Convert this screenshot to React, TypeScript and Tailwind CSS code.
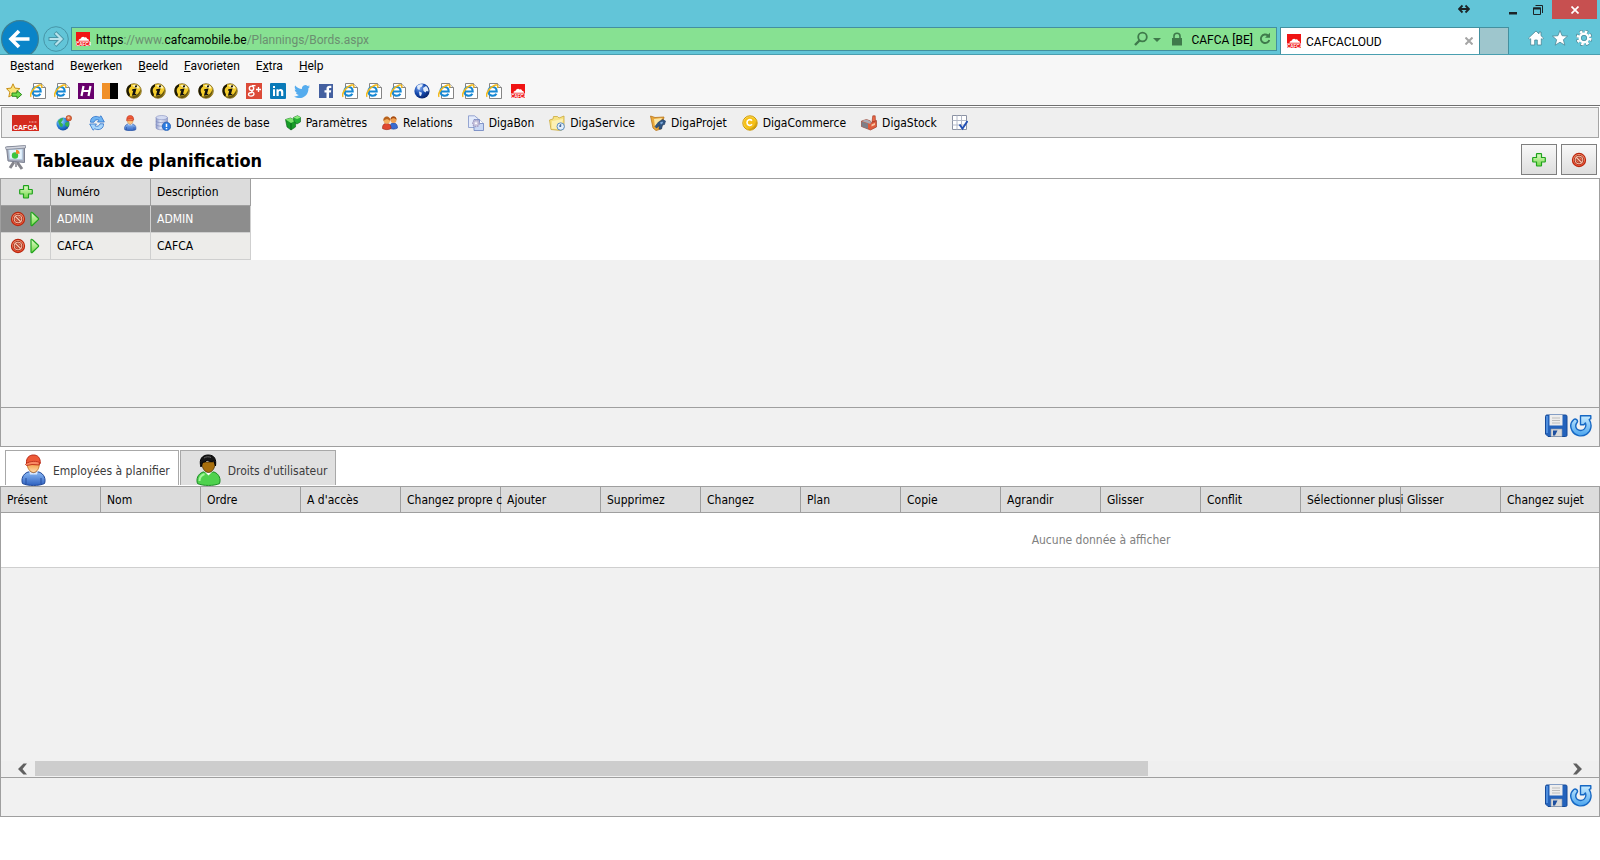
import type { ReactNode } from "react";

const tahoma = "font-['DejaVu_Sans_Condensed','DejaVu_Sans',sans-serif]";
const segoe = "font-['Roboto','Noto_Sans',sans-serif]";

function Icon({
  size = "size-4",
  box = 16,
  children,
}: {
  size?: string;
  box?: number;
  children: ReactNode;
}) {
  return (
    <svg className={`${size} shrink-0`} viewBox={`0 0 ${box} ${box}`} fill="none" aria-hidden="true">
      {children}
    </svg>
  );
}

function Gradients() {
  return (
    <svg className="absolute size-0" aria-hidden="true">
      <defs>
        <linearGradient id="red" x1="0" y1="0" x2="0" y2="1">
          <stop offset="0" stopColor="#fb9a78" />
          <stop offset="1" stopColor="#ee4a2c" />
        </linearGradient>
        <linearGradient id="green" x1="0" y1="0" x2="0" y2="1">
          <stop offset="0" stopColor="#e2fbca" />
          <stop offset="1" stopColor="#74d84a" />
        </linearGradient>
        <linearGradient id="blue" x1="0" y1="0" x2="0" y2="1">
          <stop offset="0" stopColor="#8ab8f4" />
          <stop offset="1" stopColor="#2f62c0" />
        </linearGradient>
        <linearGradient id="sky" x1="0" y1="0" x2="0" y2="1">
          <stop offset="0" stopColor="#c8ecff" />
          <stop offset="1" stopColor="#4aa4ee" />
        </linearGradient>
        <linearGradient id="skin" x1="0" y1="0" x2="0" y2="1">
          <stop offset="0" stopColor="#f29a3c" />
          <stop offset="1" stopColor="#ffdcae" />
        </linearGradient>
        <linearGradient id="gold" x1="0" y1="0" x2="1" y2="1">
          <stop offset="0" stopColor="#fff3a0" />
          <stop offset="0.6" stopColor="#f3c81e" />
          <stop offset="1" stopColor="#a87400" />
        </linearGradient>
        <linearGradient id="steel" x1="0" y1="0" x2="1" y2="0">
          <stop offset="0" stopColor="#8f9ccd" />
          <stop offset="0.4" stopColor="#e2e7f7" />
          <stop offset="1" stopColor="#9aa5ce" />
        </linearGradient>
        <radialGradient id="earth" cx="0.35" cy="0.3" r="0.8">
          <stop offset="0" stopColor="#a5dcff" />
          <stop offset="0.5" stopColor="#2a86dc" />
          <stop offset="1" stopColor="#0c3f94" />
        </radialGradient>
        <radialGradient id="navy" cx="0.35" cy="0.3" r="0.8">
          <stop offset="0" stopColor="#7fa8f0" />
          <stop offset="0.5" stopColor="#164bb0" />
          <stop offset="1" stopColor="#061c5c" />
        </radialGradient>
      </defs>
    </svg>
  );
}

function CafcaIcon() {
  return (
    <Icon>
      <path d="M1 1h14v14H1z" fill="#f01414" />
      <path d="M3.500 9.800c0-1.500 1.500-2 2.500-2.300 0-1.500 2.500-2.500 3.500-1 2-.5 2.500.5 2.500 1.300 1.500 0 2 1 2 2z" fill="#fff" />
      <path d="M1 10.300h14v.8H1z" fill="#ffb8b8" />
      <text x="1" y="14.800" fontSize="4.500" fontWeight="bold" fill="#fff" fontFamily="Liberation Sans">CAFCA</text>
    </Icon>
  );
}

function PageIcon() {
  return (
    <Icon>
      <path d="M3.500.5h8l4 4v11h-12z" fill="#fff" stroke="#858585" />
      <path d="M11.500.5v4h4" fill="#eee" stroke="#858585" />
      <path d="M2.500 8.500h8.200c0-6-8.200-6-8.200 0 0 5 6.200 5.300 7.900 2.200" stroke="#1788d4" strokeWidth="2.100" />
      <path d="M1.200 13.800C-1 11.500 3.500 4 9.500 2c2.500-.5 2.800 1 1.800 2.800" stroke="#f2b91c" strokeWidth="1.500" />
    </Icon>
  );
}

function StarArrowIcon() {
  return (
    <Icon>
      <path d="M7 .8l1.900 4.300 5 .5-3.700 3.500 1 4.900L7 11.500l-4.200 2.500 1-4.900L.5 5.600l4.600-.5z" fill="#fce37a" stroke="#c8901a" />
      <path d="M6 10h5V7.600l4.700 4-4.700 4v-2.300H6z" fill="#6fdc4a" stroke="#2d8a1e" />
    </Icon>
  );
}

function HotmailIcon() {
  return (
    <Icon>
      <path d="M0 0h16v16H0z" fill="#68006c" />
      <path d="M5.500 3L3.500 13M12.500 3l-2 10M4.500 8h7" stroke="#fff" strokeWidth="2.200" />
    </Icon>
  );
}

function StripesIcon() {
  return (
    <Icon>
      <path d="M0 0h8v16H0z" fill="#f09028" />
      <path d="M8 0h8v16H8z" fill="#000" />
    </Icon>
  );
}

function InfoBallIcon() {
  return (
    <Icon>
      <circle cx="8" cy="8" r="7.300" fill="#f4cd2c" stroke="#77601a" strokeWidth=".8" />
      <path d="M6 2.500c3-1.500 6.500-.5 7.500 2.500-2 1.500-5-.5-7.500-2.500z" fill="#fff3b4" />
      <path d="M5 1.300C0 2.500-.8 9 2.300 13c1.700.8 2.200-1 1-3C2 7.500 3 4.500 5 3.500z" fill="#1b1805" />
      <path d="M14.500 6c1 4-2 9-6.500 9-2 0-3.500-.7-4.500-1.700 4 .7 9.500-1.300 11-7.300z" fill="#3b3007" opacity=".75" />
      <path d="M9.200 2.600l2-.3-.5 2-2 .3zM6.300 6.300l4.200-.8L9 11l1.500-.2-.4 1.300-4.200.7 1.400-5.200-1.400.2z" fill="#111" />
    </Icon>
  );
}

function GooglePlusIcon() {
  return (
    <Icon>
      <path d="M0 0h16v16H0z" fill="#dc4a38" />
      <circle cx="5.500" cy="5.300" r="2.200" stroke="#fff" strokeWidth="1.400" />
      <path d="M6 2.600h3.500M6.500 7.500c-2.500 1.500 2 1.500 1.500 3.700-.5 2.600-5.500 2.300-5.500.3 0-1.400 1.500-2 3.500-2" stroke="#fff" strokeWidth="1.300" />
      <path d="M10 6.500h5M12.500 4v5" stroke="#fff" strokeWidth="1.300" />
    </Icon>
  );
}

function LinkedInIcon() {
  return (
    <Icon>
      <rect width="16" height="16" rx="1" fill="#0a7ab8" />
      <path d="M3 6.200h2V13H3zM3 3h2v2H3zM6.500 6.200h2v1c1.200-1.700 4.800-1.700 4.800 1.800v4h-2.200V9.500c0-2-2.400-2-2.400 0V13H6.500z" fill="#fff" />
    </Icon>
  );
}

function TwitterIcon() {
  return (
    <Icon>
      <path d="M16 3.500a6 6 0 01-1.800.5 3 3 0 001.400-1.800 6 6 0 01-2 .8 3.300 3.300 0 00-5.600 3C5.300 5.900 3 4.600 1.200 2.500c-.9 1.500-.4 3.400 1 4.400-.5 0-1-.2-1.500-.4 0 1.500 1.100 2.900 2.700 3.200-.5.100-1 .1-1.500 0 .4 1.300 1.600 2.200 3 2.300A6.600 6.600 0 010 13.400C7 17.500 14.700 13 14.400 5.200c.6-.5 1.200-1 1.600-1.700z" fill="#55acee" />
    </Icon>
  );
}

function FacebookIcon() {
  return (
    <Icon>
      <path d="M1 1h14v14H1z" fill="#4460a0" />
      <path d="M8.500 15V9.500h-2V7.300h2V5.500c0-2 1.300-2.800 3-2.800h1.800V5h-1.200c-.9 0-1.100.4-1.100 1v1.300h2.200l-.3 2.200H11V15z" fill="#fff" />
    </Icon>
  );
}

function WorldIcon() {
  return (
    <Icon>
      <circle cx="8" cy="8" r="7.600" fill="url(#navy)" />
      <path d="M3 3c2-2 5-2 6-1.300L7.500 4 6 4.500 5.500 7 3.500 6zM9 5l3-2c2 1.500 2.800 4 2.400 5.500L12.500 8l-1 1.500L9.500 8zM5 8.500l3 1.200L7 13l-1.500-.5z" fill="#e2ecfa" />
    </Icon>
  );
}

function GlobeIcon() {
  return (
    <Icon>
      <circle cx="7" cy="9" r="6.500" fill="url(#earth)" />
      <path d="M2 6c1-2 4-3.500 5-3l-.5 2.500L5 7.500l2 2-.8 2.500-2-.5L3 9zM9 8l3.500-1.500c1 2 .5 4.500-.5 5.500L9.500 11z" fill="#37b24d" />
      <circle cx="12.800" cy="3.200" r="2.800" fill="#e0683c" stroke="#a8401e" strokeWidth=".6" />
      <circle cx="12.500" cy="2.800" r="1.200" fill="#f9b99b" />
    </Icon>
  );
}

function RefreshIcon() {
  return (
    <Icon>
      <path d="M1.500 7.200C1 2.500 6 0 10.300 2.200L12 .8 15.300 7H8.500L10 5.200C7.800 4 5.500 5 5 7.200z" fill="#6fb4f2" stroke="#2e72ca" strokeWidth=".8" />
      <path d="M14.500 8.800c.5 4.700-4.500 7.200-8.800 5L4 15.200.7 9h6.800L6 10.800c2.200 1.200 4.500.2 5-2z" fill="#a9d6fb" stroke="#2e72ca" strokeWidth=".8" />
    </Icon>
  );
}

function WorkerIcon({ size }: { size?: string }) {
  return (
    <Icon size={size} box={32}>
      <path d="M5.500 29.500c-1.500-4 0-9.500 5.500-11.500h11c5.500 2 7 7.500 5.500 11.500-4.500 2.600-17.500 2.600-22 0z" fill="url(#blue)" stroke="#1f4696" />
      <path d="M12 17l4.500 2.500L21 17l-1 3.500h-7z" fill="#dce9fb" />
      <path d="M10 9c0 5 3 9.500 6.500 9.500S22.500 14 22.500 9z" fill="url(#skin)" stroke="#b86416" strokeWidth=".8" />
      <path d="M9.500 9.500C9 4 12 1 16.500 1 21 1 23.500 4 23.300 9.500L20 10.500l-8-1.500z" fill="#ee5a38" stroke="#b82410" />
      <path d="M8.500 10.500c1-2.500 9.500-4.500 14-2l-.5 2.500-7-.5-5.500 1z" fill="#f98a64" stroke="#b82410" strokeWidth=".8" />
      <path d="M9 24v6M24 24v6" stroke="#274f9f" />
    </Icon>
  );
}

function UserIcon({ size }: { size?: string }) {
  return (
    <Icon size={size} box={32}>
      <path d="M5.500 29.500c-1.500-4 0-9.500 5.500-11.500h11c5.500 2 7 7.500 5.500 11.500-4.500 2.600-17.500 2.600-22 0z" fill="#4fd24e" stroke="#1c8a25" />
      <path d="M7.500 27c0-4 2-6 5-7" stroke="#a5f59b" strokeWidth="2" />
      <path d="M12 17l4.500 4.500L21 17z" fill="#fff" />
      <path d="M10 8c-.5 6 3 10.500 6.500 10.500S23.500 14 23 8z" fill="#a86f0c" stroke="#4d3204" strokeWidth=".8" />
      <path d="M9 13C6.500 5 10.500 1 16 1c6.500 0 8.500 4 7.500 11l-1.500-5c-3 1-5 .5-7-1-1 2-3 2-4.500 2.500z" fill="#161616" stroke="#000" />
      <path d="M12 4c2-1.500 5-1.500 7-.5" stroke="#666" />
    </Icon>
  );
}

function DatabaseIcon() {
  return (
    <Icon>
      <path d="M1 2.500v10.300c0 2.700 11.500 2.700 11.500 0V2.500z" fill="url(#steel)" stroke="#7f8abc" strokeWidth=".6" />
      <ellipse cx="6.700" cy="2.600" rx="5.700" ry="2.100" fill="#d4dbf2" stroke="#8691c0" strokeWidth=".6" />
      <path d="M1 6c0 2.200 11.500 2.200 11.500 0M1 9.500c0 2.200 11.500 2.200 11.500 0" stroke="#7f8abc" strokeWidth=".7" />
      <circle cx="11.500" cy="11.400" r="4.200" fill="#2b7be0" stroke="#1550a8" strokeWidth=".6" />
      <path d="M11.500 8.700v3.200M11.500 12.900v1.400" stroke="#fff" strokeWidth="1.500" />
    </Icon>
  );
}

function CubesIcon() {
  return (
    <Icon>
      <path d="M.5 4.500l5-1.500L11 5.500l-.5 6.500L6 15 2 12z" fill="#179c27" stroke="#08601a" strokeWidth=".6" />
      <path d="M.5 4.500l5-1.500L11 5.500 6 8z" fill="#7be36c" />
      <path d="M6 8v7" stroke="#08601a" />
      <path d="M8.500 2.500l4-1.800 3.200 1.800-.3 4.500-3.400 2L9 6.500z" fill="#22b034" stroke="#08601a" strokeWidth=".6" />
      <path d="M8.500 2.500l4-1.800 3.200 1.800L12 4z" fill="#8bea7a" />
    </Icon>
  );
}

function PeopleIcon() {
  return (
    <Icon>
      <path d="M8 13c0-4 1-5 3.500-5s4 1.500 4 5c-2 1.500-6 1.500-7.500 0z" fill="#3a6cd0" stroke="#1e4296" strokeWidth=".6" />
      <circle cx="11.500" cy="5" r="3" fill="#f0a050" />
      <path d="M8.500 5c-.5-5 6.500-5 6 0-1.500-2-4-2.500-6 0z" fill="#a84c10" />
      <path d="M.5 13.500c0-4 1.500-5 4-5s4.500 1 4.500 5c-2 1.500-6.500 1.500-8.500 0z" fill="#e04830" stroke="#962010" strokeWidth=".6" />
      <circle cx="4.800" cy="5.500" r="3.200" fill="#f4b060" />
      <path d="M1.500 6c-1-6 7.500-6 6.700 0C6 3.500 4 3.500 1.500 6z" fill="#b8621c" />
    </Icon>
  );
}

function DocumentsIcon() {
  return (
    <Icon>
      <path d="M.5.800h6L10.500 4v8.500H.5z" fill="#e4ebfb" stroke="#7f92c8" strokeWidth=".8" />
      <path d="M6 4.500h5.500l4 4v7H6z" fill="#c9d8f5" stroke="#6a80bc" strokeWidth=".8" />
      <path d="M11.500 4.500v4h4" fill="#fff" stroke="#6a80bc" strokeWidth=".8" />
      <circle cx="8" cy="8.300" r="3.200" fill="#cdc9e0" stroke="#a19dc4" strokeWidth="1.400" strokeDasharray="1.500 .8" />
      <circle cx="8" cy="8.300" r="1" fill="#fff" />
    </Icon>
  );
}

function ServiceIcon() {
  return (
    <Icon>
      <path d="M.5 5L4 4l.5-2.500h4L10 3l5-2v12L12 15.500 2 14.500z" fill="#f7e283" stroke="#c9a83a" strokeWidth=".8" />
      <path d="M3 6l11-2-2 10.500L2.500 13.500z" fill="#fdf1b4" />
      <circle cx="11.700" cy="11.500" r="3.700" fill="#e3effc" stroke="#5f8fc0" />
      <path d="M11.700 9.200v2.400l-1.700-.8" stroke="#274f86" />
    </Icon>
  );
}

function ProjectIcon() {
  return (
    <Icon>
      <path d="M.5 1l4.500 1.500L14 2l-3 12-5 1.500L3 13z" fill="#e9a83a" stroke="#b8741a" strokeWidth=".8" />
      <path d="M4 4l8-1-2.500 7L5 12z" fill="#fbe5a4" />
      <path d="M5 11.500L8.500 7l4-2.500L15.500 6l-1 3.500-2 .5-1 4H9l.5-3.500-3 2.500z" fill="#2f5583" stroke="#19365e" strokeWidth=".6" />
      <path d="M10 7.500l2.500-1 .5 1.500-2 1.500z" fill="#7fa9d8" />
    </Icon>
  );
}

function CoinIcon() {
  return (
    <Icon>
      <circle cx="8" cy="8" r="7.200" fill="url(#gold)" stroke="#d19a08" />
      <circle cx="7.500" cy="7.500" r="5.600" fill="#f6bf17" />
      <path d="M10 5.800c-1.800-2.200-5-.9-5 1.700s3.200 3.900 5 1.700" stroke="#fff" strokeWidth="1.600" />
    </Icon>
  );
}

function StockIcon() {
  return (
    <Icon>
      <path d="M11 7l.8-6.200h2.400L14.500 7z" fill="#e86848" stroke="#a03018" strokeWidth=".6" />
      <path d="M.5 6l5-1.500 4 1.500V8l6-2.500V12l-6 3L.5 11.500z" fill="#df5c3c" stroke="#94301c" strokeWidth=".6" />
      <path d="M.5 6l5-1.500 4.500 2-.5 2.500z" fill="#a8abb5" />
      <path d="M.5 6.500v5L7 14V8.500z" fill="#7d7f88" />
      <path d="M10.500 9.500l3.500-1.500v2l-3.500 1.600z" fill="#f8c5a4" />
    </Icon>
  );
}

function GridCheckIcon() {
  return (
    <Icon>
      <path d="M.5.500h14v14H.5z" fill="#fff" stroke="#8c93a4" />
      <path d="M.5 5.500h14M.5 10h14M5 .5v14M9.500.5v14" stroke="#b4bac8" />
      <path d="M7.500 9.500l3 4 5-7.500" stroke="#2350b4" strokeWidth="1.900" />
    </Icon>
  );
}

function BoardIcon() {
  return (
    <svg className="h-7 w-6 shrink-0" viewBox="0 0 24 28" fill="none" aria-hidden="true">
      <path d="M10 18l-4 6M13 18l5 7" stroke="#85858c" strokeWidth="3" />
      <path d="M12 17v6" stroke="#a0a0a8" strokeWidth="2" />
      <path d="M2.500 3l18-1v16.500L4 17z" fill="#a6abba" stroke="#7b8091" />
      <path d="M4.800 5.500l13.500-.5v10.500l-12.700-.4z" fill="#e6f4ff" stroke="#b6cbe0" />
      <path d="M1.500 3L21.500 1.500V4L2 5.500z" fill="#d4d7e0" stroke="#777c8c" strokeWidth=".7" />
      <circle cx="11" cy="11.500" r="3.200" fill="#3cc440" />
      <path d="M12 9.800V5.800c2.300 0 3.700 1.600 3.700 4z" fill="#f28a2a" />
    </svg>
  );
}

function PlusIcon() {
  return (
    <Icon>
      <path
        d="M6 1.700h4c.3 0 .5.200.5.500v3.300h3.300c.3 0 .5.200.5.500v3.500c0 .3-.2.500-.5.500h-3.300v3.500c0 .3-.2.500-.5.500H6c-.3 0-.5-.2-.5-.5V10H2.200c-.3 0-.5-.2-.5-.5V6c0-.3.200-.5.500-.5h3.300V2.200c0-.3.200-.5.500-.5z"
        fill="url(#green)"
        stroke="#1fa31c"
        strokeWidth="1.200"
      />
    </Icon>
  );
}

function ForbidIcon() {
  return (
    <Icon>
      <circle cx="8" cy="8" r="6.600" fill="url(#red)" stroke="#b8260e" strokeWidth="1.100" />
      <circle cx="8" cy="8" r="3.900" stroke="#8c2a1a" strokeWidth="2.200" />
      <path d="M5.200 5.200l5.600 5.600" stroke="#8c2a1a" strokeWidth="2.800" />
      <circle cx="8" cy="8" r="3.900" stroke="#ffc4ac" strokeWidth="1" />
      <path d="M5.200 5.200l5.600 5.600" stroke="#ffc4ac" strokeWidth="1.400" />
    </Icon>
  );
}

function PlayIcon() {
  return (
    <svg className="h-4 w-3 shrink-0" viewBox="0 0 12 16" fill="none" aria-hidden="true">
      <path
        d="M2 2c0-.8.800-1 1.500-.3l5.800 5.500c.5.500.5 1 0 1.500l-5.800 5.600C2.800 15 2 14.800 2 14z"
        fill="url(#green)"
        stroke="#1fa31c"
        strokeWidth="1.200"
      />
    </svg>
  );
}

function SaveIcon() {
  return (
    <Icon size="size-6" box={24}>
      <path d="M1.500 2.500c0-1 .5-1.500 1.500-1.500h18.500c1 0 1.500.5 1.500 1.500V21c0 1-.5 1.500-1.500 1.500H4L1.500 20z" fill="#2463bc" stroke="#164a98" />
      <path d="M3 2v17" stroke="#5b9be8" strokeWidth="1.500" />
      <path d="M5.500 1h13v10.500h-13z" fill="#ededed" />
      <path d="M8 4h8M8 6.500h8M8 9h8" stroke="#bdbdbd" />
      <path d="M7 15h11v7.500H7z" fill="#d9d9d9" stroke="#8f98a8" strokeWidth=".6" />
      <path d="M9 16.500h4.500L11 21.500H9z" fill="#1d4f9f" />
    </Icon>
  );
}

function UndoIcon() {
  return (
    <Icon size="size-6" box={24}>
      <path
        d="M11.500 1.700h10.300v3c-.8.100-1.300.4-1.600.9 3.300 5 2 11.500-2.500 14.500-5.200 3.400-12 1.700-14.700-3.500C.8 12.300 2 8 4.800 5.500c1.700-1.500 4.600.8 3.400 2.800-1.800 2.300-1.800 5 0 6.900 2 1.800 5.300 1.800 7.200-.3 1.600-1.900 1.800-3.900 1-5.900l-1.600 1.800h-3.300z"
        fill="url(#sky)"
        stroke="#1668c4"
        strokeWidth="1.400"
        strokeLinejoin="round"
      />
    </Icon>
  );
}

const menu = [
  ["B", "e", "stand"],
  ["Be", "w", "erken"],
  ["", "B", "eeld"],
  ["", "F", "avorieten"],
  ["E", "x", "tra"],
  ["", "H", "elp"],
];

const favorites = [
  StarArrowIcon,
  PageIcon,
  PageIcon,
  HotmailIcon,
  StripesIcon,
  InfoBallIcon,
  InfoBallIcon,
  InfoBallIcon,
  InfoBallIcon,
  InfoBallIcon,
  GooglePlusIcon,
  LinkedInIcon,
  TwitterIcon,
  FacebookIcon,
  PageIcon,
  PageIcon,
  PageIcon,
  WorldIcon,
  PageIcon,
  PageIcon,
  PageIcon,
  CafcaIcon,
];

const shortcuts = [
  { icon: GlobeIcon, name: "Web" },
  { icon: RefreshIcon, name: "Actualiser" },
  { icon: WorkerIcon, name: "Employé" },
];

const modules = [
  { icon: DatabaseIcon, label: "Données de base" },
  { icon: CubesIcon, label: "Paramètres" },
  { icon: PeopleIcon, label: "Relations" },
  { icon: DocumentsIcon, label: "DigaBon" },
  { icon: ServiceIcon, label: "DigaService" },
  { icon: ProjectIcon, label: "DigaProjet" },
  { icon: CoinIcon, label: "DigaCommerce" },
  { icon: StockIcon, label: "DigaStock" },
];

const boards = [
  { number: "ADMIN", description: "ADMIN", selected: true },
  { number: "CAFCA", description: "CAFCA", selected: false },
];

const columns = [
  "Présent",
  "Nom",
  "Ordre",
  "A d'accès",
  "Changez propre c",
  "Ajouter",
  "Supprimez",
  "Changez",
  "Plan",
  "Copie",
  "Agrandir",
  "Glisser",
  "Conflit",
  "Sélectionner plusi",
  "Glisser",
  "Changez sujet",
];

function WindowControls() {
  return (
    <div className="flex h-[19px] justify-end pr-[3px]">
      <button aria-label="Resize" className="flex w-5 justify-end">
        <svg className="h-[18px] w-3" viewBox="0 0 12 18" fill="none" aria-hidden="true">
          <path d="M2 9h8M4.500 5.500L1 9l3.500 3.500M7.500 5.500L11 9l-3.500 3.500" stroke="#1c2326" strokeWidth="1.800" />
        </svg>
      </button>
      <button aria-label="Minimize" className="flex w-[54px] items-center justify-end pr-1">
        <Icon size="size-3" box={12}>
          <path d="M1 8h8v2.500H1z" fill="#1c2326" />
        </Icon>
      </button>
      <button aria-label="Restore" className="flex w-7 items-center justify-center">
        <Icon size="size-3" box={12}>
          <path d="M3.500 1.500h7V9M1.500 4h7v6.500h-7z" stroke="#1c2326" />
          <path d="M1 4.500h8" stroke="#1c2326" strokeWidth="2" />
        </Icon>
      </button>
      <button aria-label="Close" className="flex w-[45px] items-center justify-center bg-[#c75050]">
        <Icon size="size-2" box={8}>
          <path d="M.5.5l7 7M7.500.5l-7 7" stroke="#fff" strokeWidth="1.700" />
        </Icon>
      </button>
    </div>
  );
}

function AddressBar() {
  return (
    <div className="relative flex h-6 flex-1 items-center border border-[#43909f] bg-[#87e192] pr-[3px] pl-[3px]">
      <CafcaIcon />
      <label htmlFor="address" className="flex-1 pt-px pl-[5px] text-[#6b8f71]">
        <span className="text-black">https</span>://www.
        <span className="text-black">cafcamobile.be</span>/Plannings/Bords.aspx
      </label>
      <input id="address" type="text" className="absolute inset-y-0 left-6 w-1/2 bg-transparent outline-none" />
      <button aria-label="Search" className="flex items-center gap-1">
        <Icon>
          <circle cx="9.500" cy="6" r="4.300" stroke="#3f7a4b" strokeWidth="1.800" />
          <path d="M6.500 9.500L2 14" stroke="#3f7a4b" strokeWidth="2.400" />
        </Icon>
        <svg className="size-2" viewBox="0 0 8 8" aria-hidden="true">
          <path d="M0 3h8L4 7z" fill="#3f7a4b" />
        </svg>
      </button>
      <div className="flex items-center gap-2 pl-[10px]">
        <svg className="h-4 w-3" viewBox="0 0 12 16" fill="none" aria-hidden="true">
          <path d="M1 7h10v7.500H1z" fill="#3f7a4b" />
          <path d="M3 7.500V5c0-3.600 6-3.600 6 0v2.500" stroke="#3f7a4b" strokeWidth="1.600" />
        </svg>
        <span className="pt-px">CAFCA [BE]</span>
      </div>
      <button aria-label="Reload" className="pl-1">
        <Icon>
          <path d="M11 4.500A4.300 4.300 0 1012.300 9" stroke="#3f7a4b" strokeWidth="1.900" />
          <path d="M8 6.700h5V1.700z" fill="#3f7a4b" />
        </Icon>
      </button>
    </div>
  );
}

function BrowserBar() {
  return (
    <header className="flex h-[55px] items-stretch overflow-hidden border-b border-[#4a9fb0] bg-[#62c5d8]">
      <div className="flex shrink-0 items-start gap-1 pt-5 pl-px">
        <button aria-label="Back">
          <Icon size="size-[38px]" box={38}>
            <circle cx="19" cy="19" r="18.400" fill="#0a84c8" stroke="#3c7f92" strokeWidth="1.200" />
            <path d="M28.500 19H11M18 11l-8 8 8 8" stroke="#fff" strokeWidth="3.600" />
          </Icon>
        </button>
        <button aria-label="Forward" className="pt-[6px]">
          <Icon size="size-[26px]" box={26}>
            <circle cx="13" cy="13" r="12.300" stroke="#4795a7" />
            <path d="M5.500 13h12M12 6.500l6.500 6.500-6.500 6.500" stroke="#4795a7" strokeWidth="4" />
            <path d="M6.500 13h11M12.500 7l6 6-6 6" stroke="#b9e3ec" strokeWidth="2.200" />
          </Icon>
        </button>
      </div>

      <div className="flex flex-1 items-end pb-[3px] pl-[2px]">
        <AddressBar />
      </div>

      <div className="flex w-[323px] shrink-0 flex-col justify-between">
        <WindowControls />
        <div className="flex h-[27px] pl-[3px]">
          <div className="flex w-[200px] items-center border-x border-t border-[#43909f] bg-white pl-[5px]">
            <CafcaIcon />
            <span className="flex-1 pt-px pl-1">CAFCACLOUD</span>
            <button aria-label="Close tab" className="pr-[6px]">
              <Icon size="size-2" box={8}>
                <path d="M.5.5l7 7M7.500.5l-7 7" stroke="#a5a5a5" strokeWidth="2" />
              </Icon>
            </button>
          </div>
          <button aria-label="New tab" className="w-[29px] border-t border-r border-[#43909f] bg-[#9ec6cd]" />
          <div className="flex flex-1 items-center justify-end gap-2 pr-2 pb-[5px]">
            <button aria-label="Home">
              <Icon>
                <path d="M8 1L.5 8l1.300 1.500.9-.8V15h4v-5h2.600v5h4V8.700l.9.800L15.500 8 13 5.700V2h-2v1.800z" fill="#fff" stroke="#4a8795" strokeWidth=".8" />
              </Icon>
            </button>
            <button aria-label="Favorites">
              <Icon>
                <path d="M8 .5l2.100 5.200 5.500.4-4.200 3.600 1.400 5.500L8 12.200l-4.800 3 1.400-5.500L.4 6.100l5.500-.4z" fill="#fff" stroke="#4a8795" strokeWidth=".8" />
              </Icon>
            </button>
            <button aria-label="Tools">
              <Icon>
                <circle cx="8" cy="8" r="6.300" stroke="#4a8795" strokeWidth="4" strokeDasharray="3 1.950" />
                <circle cx="8" cy="8" r="6.300" stroke="#fff" strokeWidth="2.600" strokeDasharray="2.600 2.350" />
                <circle cx="8" cy="8" r="4.200" stroke="#fff" strokeWidth="2.400" />
                <circle cx="8" cy="8" r="2.700" stroke="#4a8795" strokeWidth=".7" />
              </Icon>
            </button>
          </div>
        </div>
      </div>
    </header>
  );
}

function PanelFooter() {
  return (
    <div className="flex h-[39px] justify-end gap-px border-t border-[#9f9f9f] pt-[6px] pr-[6px]">
      <button aria-label="Enregistrer" className="h-6">
        <SaveIcon />
      </button>
      <button aria-label="Annuler" className="h-6">
        <UndoIcon />
      </button>
    </div>
  );
}

function BoardsTable() {
  const head = "border-r border-b border-[#9f9f9f] bg-[#dcdcdc] px-[6px] text-left font-normal";
  return (
    <table className="w-[250px] table-fixed border-separate border-spacing-0">
      <thead>
        <tr className="h-[27px]">
          <th className={`${head} w-[50px]`}>
            <button aria-label="Ajouter" className="flex w-full justify-center">
              <PlusIcon />
            </button>
          </th>
          <th className={head}>Numéro</th>
          <th className={head}>Description</th>
        </tr>
      </thead>
      <tbody>
        {boards.map((board) => (
          <tr
            key={board.number}
            className={board.selected ? "h-[27px] bg-[#8d8d8d] text-white" : "h-[27px] bg-[#edecea]"}
          >
            <td className="border-r border-b border-[#cfcfcf]">
              <div className="flex pb-px pl-[9px]">
                <button aria-label="Supprimer">
                  <ForbidIcon />
                </button>
                <button aria-label="Ouvrir" className="pl-[3px]">
                  <PlayIcon />
                </button>
              </div>
            </td>
            <td className="border-r border-b border-[#cfcfcf] px-[6px]">{board.number}</td>
            <td className="border-r border-b border-[#cfcfcf] px-[6px]">{board.description}</td>
          </tr>
        ))}
      </tbody>
    </table>
  );
}

function EmployeesTable() {
  return (
    <table className="w-[2200px] table-fixed border-separate border-spacing-0 bg-white">
      <thead>
        <tr className="h-[26px] bg-[#dcdcdc]">
          {columns.map((column, index) => (
            <th
              key={index}
              className="w-[100px] border-r border-b border-[#9f9f9f] pl-[6px] text-left font-normal whitespace-nowrap"
            >
              {column}
            </th>
          ))}
          <th className="border-b border-[#9f9f9f]" />
        </tr>
      </thead>
      <tbody>
        <tr className="h-[55px]">
          <td colSpan={17} className="border-b border-[#cfcfcf] text-center text-[#808080]">
            Aucune donnée à afficher
          </td>
        </tr>
      </tbody>
    </table>
  );
}

export default function App() {
  const action =
    "flex h-[31px] w-9 items-center justify-center border border-[#7f7f7f] bg-linear-to-b from-[#f8f8f8] to-[#dedede]";
  const tab = "flex h-[35px] items-center gap-1 border-x border-t border-[#a8a8a8] pr-2 pl-[11px]";
  return (
    <div className={`min-h-screen bg-white text-xs text-black ${tahoma}`}>
      <Gradients />
      <div className={segoe}>
        <BrowserBar />
        <div className="h-[51px] border-b border-[#6f6f6f] bg-[#f7f7f7]">
          <nav className="flex h-[22px] items-center gap-4 pl-[10px]">
            {menu.map(([before, key, after]) => (
              <button key={before + key + after}>
                {before}
                <span className="underline">{key}</span>
                {after}
              </button>
            ))}
          </nav>
          <div className="flex gap-2 pt-[6px] pl-[6px]">
            {favorites.map((Favorite, index) => (
              <button key={index} aria-label="Favorite">
                <Favorite />
              </button>
            ))}
          </div>
        </div>
      </div>

      <nav className="mx-px mt-px flex h-[31px] items-center gap-[17px] border border-[#a5a5a5] bg-[#efefef] pl-[10px]">
        <a href="#" aria-label="CAFCA" className="h-4 w-[27px] bg-[#d42a1e]">
          <svg className="h-4 w-[27px]" viewBox="0 0 27 16" aria-hidden="true">
            <text x="1" y="15" fontSize="7" fontWeight="bold" fill="#fff" fontFamily="Liberation Sans">CAFCA</text>
            <path d="M17 7h8" stroke="#f2b8b2" strokeDasharray="1 .5" />
          </svg>
        </a>
        {shortcuts.map(({ icon: ShortcutIcon, name }) => (
          <button key={name} aria-label={name}>
            <ShortcutIcon />
          </button>
        ))}
        <div className="flex items-center gap-[15px]">
          {modules.map(({ icon: ModuleIcon, label }) => (
            <button key={label} className="flex shrink-0 items-center gap-[5px]">
              <ModuleIcon />
              {label}
            </button>
          ))}
          <button aria-label="Tâches">
            <GridCheckIcon />
          </button>
        </div>
      </nav>

      <div className="flex h-10 items-center justify-between pr-[3px] pl-1">
        <div className="flex items-center gap-[6px]">
          <BoardIcon />
          <h1 className="pt-[5px] text-lg font-bold">Tableaux de planification</h1>
        </div>
        <div className="flex gap-1 pt-[3px]">
          <button aria-label="Ajouter" className={action}>
            <PlusIcon />
          </button>
          <button aria-label="Supprimer" className={action}>
            <ForbidIcon />
          </button>
        </div>
      </div>

      <section className="border border-[#9f9f9f] bg-[#f1f1f1]">
        <div className="h-[228px]">
          <div className="bg-white">
            <BoardsTable />
          </div>
        </div>
        <PanelFooter />
      </section>

      <div className="flex gap-px pt-[3px] pl-[5px] text-[#3c3c3c]">
        <button className={`${tab} bg-white`}>
          <span className="pt-[3px]">
            <WorkerIcon size="size-8" />
          </span>
          <span className="pt-[6px]">Employées à planifier</span>
        </button>
        <button className={`${tab} bg-[#e0e0e0]`}>
          <span className="pt-[3px]">
            <UserIcon size="size-8" />
          </span>
          <span className="pt-[6px]">Droits d'utilisateur</span>
        </button>
      </div>

      <section className="mt-px border border-[#9f9f9f] bg-[#f1f1f1]">
        <div className="flex h-[290px] flex-col justify-between pb-px">
          <div className="overflow-hidden">
            <EmployeesTable />
          </div>
          <div className="flex h-[15px] items-center bg-[#efefef] px-4">
            <button aria-label="Défiler à gauche" className="w-[18px]">
              <Icon size="size-3" box={12}>
                <path d="M6.500.5h3.500L5.500 6l4.500 5.500H6.500L1 6z" fill="#606060" />
              </Icon>
            </button>
            <div className="h-full flex-1">
              <div className="h-full bg-[#cdcdcd]" style={{ width: `${(1600 / 2200) * 100}%` }} />
            </div>
            <button aria-label="Défiler à droite" className="flex w-[18px] justify-end">
              <Icon size="size-3" box={12}>
                <path d="M5.500.5H2L6.500 6 2 11.500h3.500L11 6z" fill="#606060" />
              </Icon>
            </button>
          </div>
        </div>
        <PanelFooter />
      </section>
    </div>
  );
}
